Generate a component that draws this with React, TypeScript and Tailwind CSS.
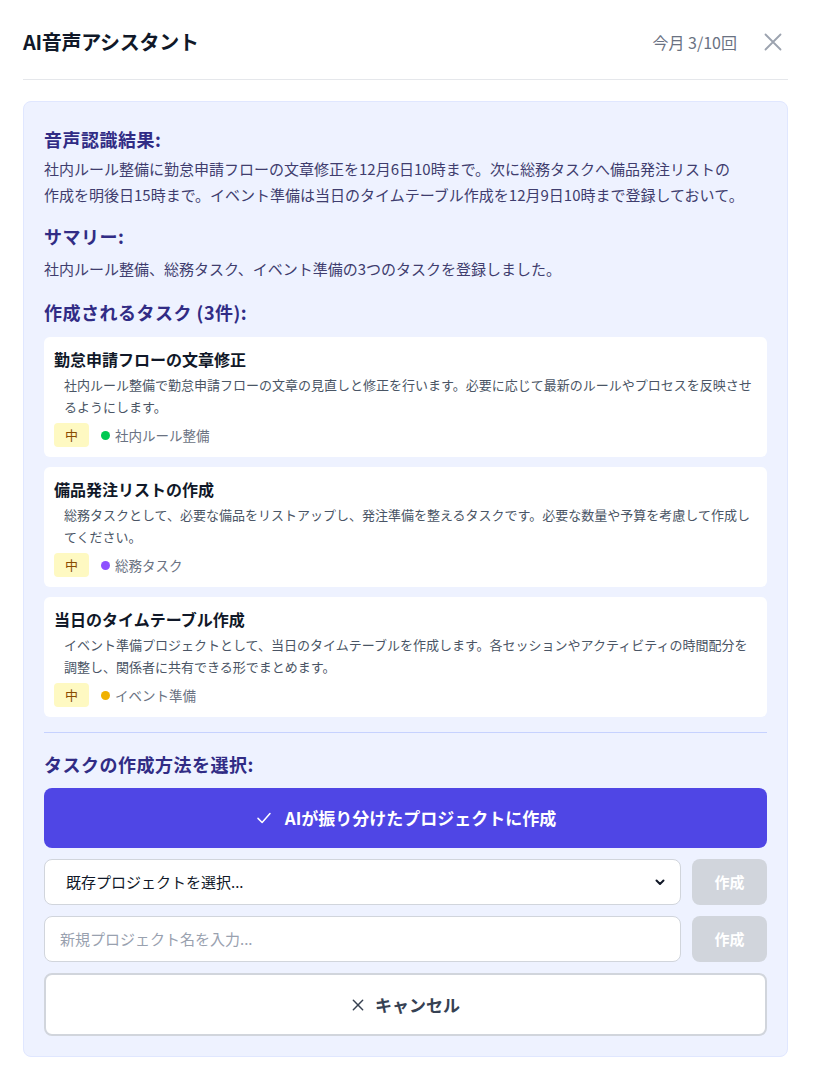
import React from "react";

const tasks = [
  {
    title: "勤怠申請フローの文章修正",
    desc: "社内ルール整備で勤怠申請フローの文章の見直しと修正を行います。必要に応じて最新のルールやプロセスを反映させるようにします。",
    project: "社内ルール整備",
    dot: "bg-green-500",
  },
  {
    title: "備品発注リストの作成",
    desc: "総務タスクとして、必要な備品をリストアップし、発注準備を整えるタスクです。必要な数量や予算を考慮して作成してください。",
    project: "総務タスク",
    dot: "bg-violet-500",
  },
  {
    title: "当日のタイムテーブル作成",
    desc: "イベント準備プロジェクトとして、当日のタイムテーブルを作成します。各セッションやアクティビティの時間配分を調整し、関係者に共有できる形でまとめます。",
    project: "イベント準備",
    dot: "bg-yellow-500",
  },
];

export default function App() {
  return (
    <div
      className="w-[814px] min-h-[1065px] bg-white pl-[23px] pr-[26px]"
      style={{ fontFamily: '"Noto Sans CJK JP", "Noto Sans", sans-serif' }}
    >
      <div className="flex items-center justify-between h-[80px] border-b border-gray-200 pt-[4px]">
        <h1 className="text-[20px] font-semibold text-gray-900 tracking-[-0.3px]">AI音声アシスタント</h1>
        <div className="flex items-center gap-[26px]">
          <span className="text-[16px] text-gray-500">今月 3/10回</span>
          <svg width="20" height="20" viewBox="0 0 24 24" fill="none" stroke="#9ca3af" strokeWidth="2.2" strokeLinecap="round" className="mr-[5px]">
            <path d="M3 3L21 21M21 3L3 21" />
          </svg>
        </div>
      </div>

      <div className="mt-[21px] bg-indigo-50 border border-indigo-100 rounded-lg px-[20px] pt-[25px] pb-[20px]">
        <h2 className="text-[18px] font-semibold text-indigo-900 leading-[24px] tracking-[0.5px]">音声認識結果:</h2>
        <p className="text-[15px] text-[#3f3d6e] leading-[26px] mt-[5px]">
          社内ルール整備に勤怠申請フローの文章修正を12月6日10時まで。次に総務タスクへ備品発注リストの
          <br />
          作成を明後日15時まで。イベント準備は当日のタイムテーブル作成を12月9日10時まで登録しておいて。
        </p>

        <h2 className="text-[18px] font-semibold text-indigo-900 leading-[24px] tracking-[0.5px] mt-[16px]">サマリー:</h2>
        <p className="text-[15px] text-[#3f3d6e] leading-[26px] mt-[8px]">
          社内ルール整備、総務タスク、イベント準備の3つのタスクを登録しました。
        </p>

        <h2 className="text-[18px] font-semibold text-indigo-900 leading-[24px] tracking-[0.5px] mt-[18px]">作成されるタスク (3件):</h2>
        <div className="flex flex-col gap-[10px] mt-[13px]">
          {tasks.map((t) => (
            <div key={t.title} className="bg-white rounded-md px-[10px] pt-[11px] pb-[10px]">
              <div className="text-[16px] font-semibold text-gray-900 leading-[22px]">{t.title}</div>
              <p className="text-[13px] text-gray-600 leading-[22px] pl-[10px] mt-[4px]">{t.desc}</p>
              <div className="flex items-center gap-[12px] mt-[5px]">
                <span className="bg-yellow-100 text-yellow-800 text-[13px] rounded px-[11px] h-[24px] flex items-center">中</span>
                <span className="flex items-center gap-[5px] text-[13.5px] text-gray-500">
                  <span className={`w-[9px] h-[9px] rounded-full ${t.dot}`} />
                  {t.project}
                </span>
              </div>
            </div>
          ))}
        </div>

        <div className="border-t border-indigo-200 mt-[15px] pt-[19px]">
          <h2 className="text-[18px] font-semibold text-indigo-900 leading-[24px] tracking-[0.5px]">タスクの作成方法を選択:</h2>
          <button className="mt-[12px] w-full h-[60px] bg-[#4f46e5] rounded-lg flex items-center justify-center gap-[12px] text-white text-[17px] font-semibold">
            <svg width="18" height="18" viewBox="0 0 24 24" fill="none" stroke="white" strokeWidth="2" strokeLinecap="round" strokeLinejoin="round">
              <path d="M4 12.5L9.5 18L20 6" />
            </svg>
            AIが振り分けたプロジェクトに作成
          </button>

          <div className="flex gap-[11px] mt-[11px]">
            <div className="flex-1 h-[46px] bg-white border border-gray-300 rounded-lg flex items-center justify-between pl-[21px] pr-[14px]">
              <span className="text-[15px] text-gray-900">既存プロジェクトを選択...</span>
              <svg width="12" height="12" viewBox="0 0 24 24" fill="none" stroke="#111827" strokeWidth="4" strokeLinecap="round" strokeLinejoin="round">
                <path d="M5 9l7 7 7-7" />
              </svg>
            </div>
            <button className="w-[75px] h-[46px] bg-gray-300 rounded-lg text-white text-[15px] font-semibold">作成</button>
          </div>

          <div className="flex gap-[11px] mt-[11px]">
            <div className="flex-1 h-[46px] bg-white border border-gray-300 rounded-lg flex items-center pl-[15px]">
              <span className="text-[15px] text-gray-400">新規プロジェクト名を入力...</span>
            </div>
            <button className="w-[75px] h-[46px] bg-gray-300 rounded-lg text-white text-[15px] font-semibold">作成</button>
          </div>

          <button className="mt-[11px] w-full h-[63px] bg-white border-2 border-gray-300 rounded-lg flex items-center justify-center gap-[10px] text-gray-700 text-[17px] font-semibold">
            <svg width="14" height="14" viewBox="0 0 24 24" fill="none" stroke="#374151" strokeWidth="2.5" strokeLinecap="round">
              <path d="M4 4L20 20M20 4L4 20" />
            </svg>
            キャンセル
          </button>
        </div>
      </div>
    </div>
  );
}
